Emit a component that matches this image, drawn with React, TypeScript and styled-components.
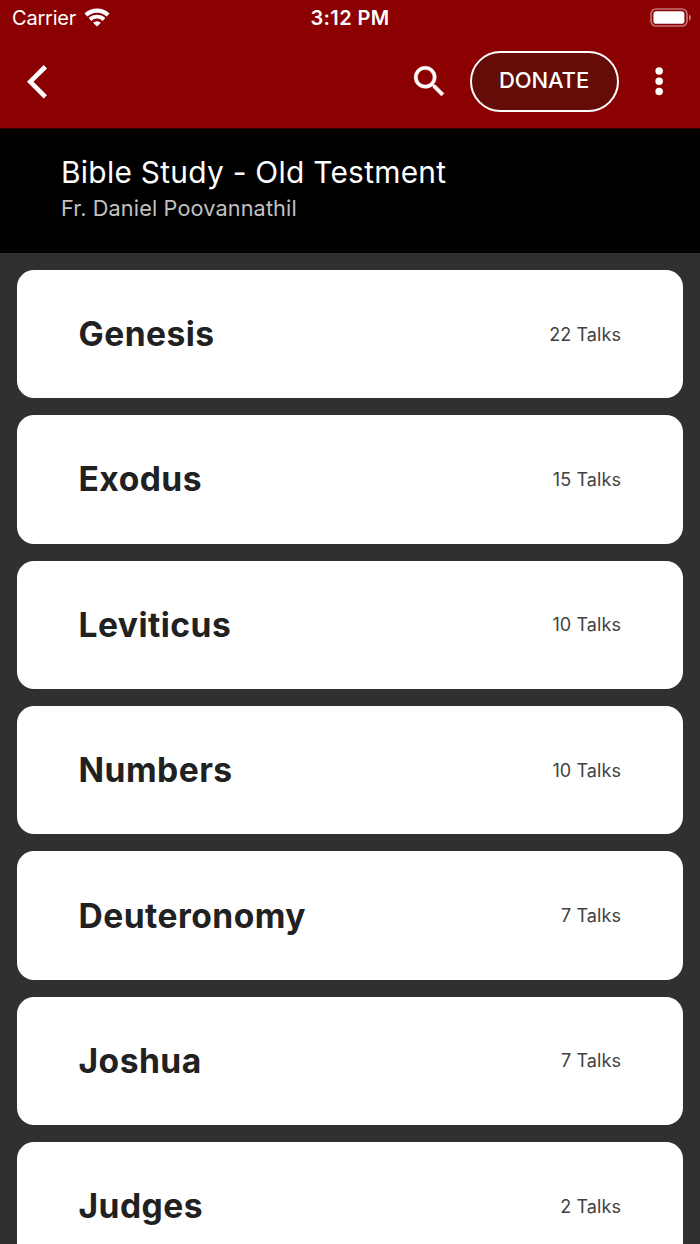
import React from "react";
import styled, { createGlobalStyle } from "styled-components";

const GlobalStyle = createGlobalStyle`
  *, *::before, *::after { box-sizing: border-box; }
  html, body { margin: 0; padding: 0; height: 100%; overflow: hidden; background: #303030; }
  body { font-family: Inter, "Liberation Sans", sans-serif; -webkit-font-smoothing: antialiased; }
  svg { display: block; }
`;

const Screen = styled.div`
  display: flex;
  flex-direction: column;
  width: 700px;
  height: 1244px;
  overflow: hidden;
  background: #303030;
`;

const TopArea = styled.header`
  flex: none;
  height: 129px;
  border-bottom: 1px solid #380000;
  background: #8b0000;
  color: #fff;
`;

const StatusBar = styled.div`
  display: grid;
  grid-template-columns: 1fr auto 1fr;
  align-items: center;
  height: 36px;
  padding: 0 8px 0 12px;
  font-size: 20px;
  line-height: 24px;
`;

const Carrier = styled.div`
  display: flex;
  align-items: center;
  gap: 8px;
  letter-spacing: -0.2px;
`;

const Clock = styled.div`
  padding-right: 4px;
  font-weight: 600;
  letter-spacing: 0.4px;
`;

const Battery = styled.div`
  justify-self: end;
`;

const AppBar = styled.div`
  display: flex;
  align-items: center;
  height: 91px;
  padding: 0 20px 0 26px;
`;

const IconButton = styled.button`
  display: flex;
  padding: 0;
  border: 0;
  background: none;
  color: inherit;
`;

const Actions = styled.div`
  display: flex;
  align-items: center;
  margin-left: auto;
`;

const DonateButton = styled.button`
  width: 149px;
  height: 61px;
  margin: 0 20px 0;
  padding: 0 1px 3px 0;
  border: 2px solid #fff;
  border-radius: 31px;
  background: #650c08;
  color: #fff;
  font: 500 22px/26px Inter, "Liberation Sans", sans-serif;
  letter-spacing: -0.1px;
`;

const SeriesHeader = styled.section`
  flex: none;
  height: 123.5px;
  padding: 25px 61px 0;
  background: #000;
`;

const SeriesTitle = styled.h1`
  margin: 0;
  color: #fff;
  font-size: 29.87px;
  line-height: 37px;
  font-weight: 400;
  letter-spacing: 0.28px;
`;

const Speaker = styled.p`
  margin: 3px 0 0;
  color: #c0c0c0;
  font-size: 21.7px;
  line-height: 28px;
  letter-spacing: 0.12px;
`;

const BookList = styled.main`
  display: flex;
  flex-direction: column;
  gap: 16.85px;
  padding: 17.4px 17px 0;
`;

const BookCard = styled.article`
  display: flex;
  flex: none;
  align-items: center;
  justify-content: space-between;
  height: 128.5px;
  padding: 0 62px 0 61.5px;
  border-radius: 17px;
  background: #fff;
`;

const BookName = styled.h2`
  margin: 0;
  color: #212121;
  font-size: 33.6px;
  line-height: 40px;
  font-weight: 660;
  letter-spacing: 0.47px;
`;

const TalkCount = styled.span`
  padding-top: 0.8px;
  color: #424242;
  font-size: 18px;
  line-height: 24px;
  letter-spacing: 0.08px;
`;

const books = [
  { name: "Genesis", talks: 22 },
  { name: "Exodus", talks: 15 },
  { name: "Leviticus", talks: 10 },
  { name: "Numbers", talks: 10 },
  { name: "Deuteronomy", talks: 7 },
  { name: "Joshua", talks: 7 },
  { name: "Judges", talks: 2 },
];

const WifiIcon = () => (
  <svg width="26" height="20" viewBox="0 0 26 20" fill="none" stroke="#fff" strokeWidth="4.2">
    <path d="M1.9 7a16.2 16.2 0 0 1 22.2 0" />
    <path d="M6 11.5a10.2 10.2 0 0 1 14 0" strokeWidth="3.8" />
    <path d="M13 18.6 9.1 14.8a5.7 5.7 0 0 1 7.8 0z" fill="#fff" stroke="none" />
  </svg>
);

const BatteryIcon = () => (
  <svg width="42" height="20" viewBox="0 0 42 20">
    <rect x="1" y="1" width="36" height="17" rx="5" fill="none" stroke="#fff" strokeOpacity=".45" strokeWidth="1.7" />
    <rect x="3.4" y="3.3" width="31" height="12.4" rx="2.8" fill="#fff" />
    <path d="M39 6.6c2.5 1 2.5 5 0 6z" fill="#fff" fillOpacity=".5" />
  </svg>
);

const BackIcon = () => (
  <svg width="22" height="36" viewBox="0 0 22 36" fill="#fff">
    <path d="M17.7 1.1 21 4.4 7.5 17.8 21 31.2 17.7 34.5 1 17.8z" />
  </svg>
);

const SearchIcon = () => (
  <svg width="41" height="41" viewBox="0 0 24 24" fill="#fff" stroke="#fff" strokeWidth=".25">
    <path d="M15.5 14h-.79l-.28-.27A6.471 6.471 0 0 0 16 9.5 6.5 6.5 0 1 0 9.5 16c1.61 0 3.09-.59 4.23-1.57l.27.28v.79l5 4.99L20.49 19l-4.99-5zm-6 0C7.01 14 5 11.99 5 9.5S7.01 5 9.5 5 14 7.01 14 9.5 11.99 14 9.5 14z" />
  </svg>
);

const MoreIcon = () => (
  <svg width="41" height="41" viewBox="0 0 24 24" fill="#fff">
    <circle cx="11.8" cy="5.8" r="2.2" />
    <circle cx="11.8" cy="11.8" r="2.2" />
    <circle cx="11.8" cy="17.8" r="2.2" />
  </svg>
);

export default function App() {
  return (
    <>
      <GlobalStyle />
      <Screen>
        <TopArea>
          <StatusBar>
            <Carrier>
              <span>Carrier</span>
              <WifiIcon />
            </Carrier>
            <Clock>3:12 PM</Clock>
            <Battery>
              <BatteryIcon />
            </Battery>
          </StatusBar>
          <AppBar>
            <IconButton aria-label="Back">
              <BackIcon />
            </IconButton>
            <Actions>
              <IconButton aria-label="Search">
                <SearchIcon />
              </IconButton>
              <DonateButton>DONATE</DonateButton>
              <IconButton aria-label="More options">
                <MoreIcon />
              </IconButton>
            </Actions>
          </AppBar>
        </TopArea>
        <SeriesHeader>
          <SeriesTitle>Bible Study - Old Testment</SeriesTitle>
          <Speaker>Fr. Daniel Poovannathil</Speaker>
        </SeriesHeader>
        <BookList>
          {books.map((book) => (
            <BookCard key={book.name}>
              <BookName>{book.name}</BookName>
              <TalkCount>{book.talks} Talks</TalkCount>
            </BookCard>
          ))}
        </BookList>
      </Screen>
    </>
  );
}
